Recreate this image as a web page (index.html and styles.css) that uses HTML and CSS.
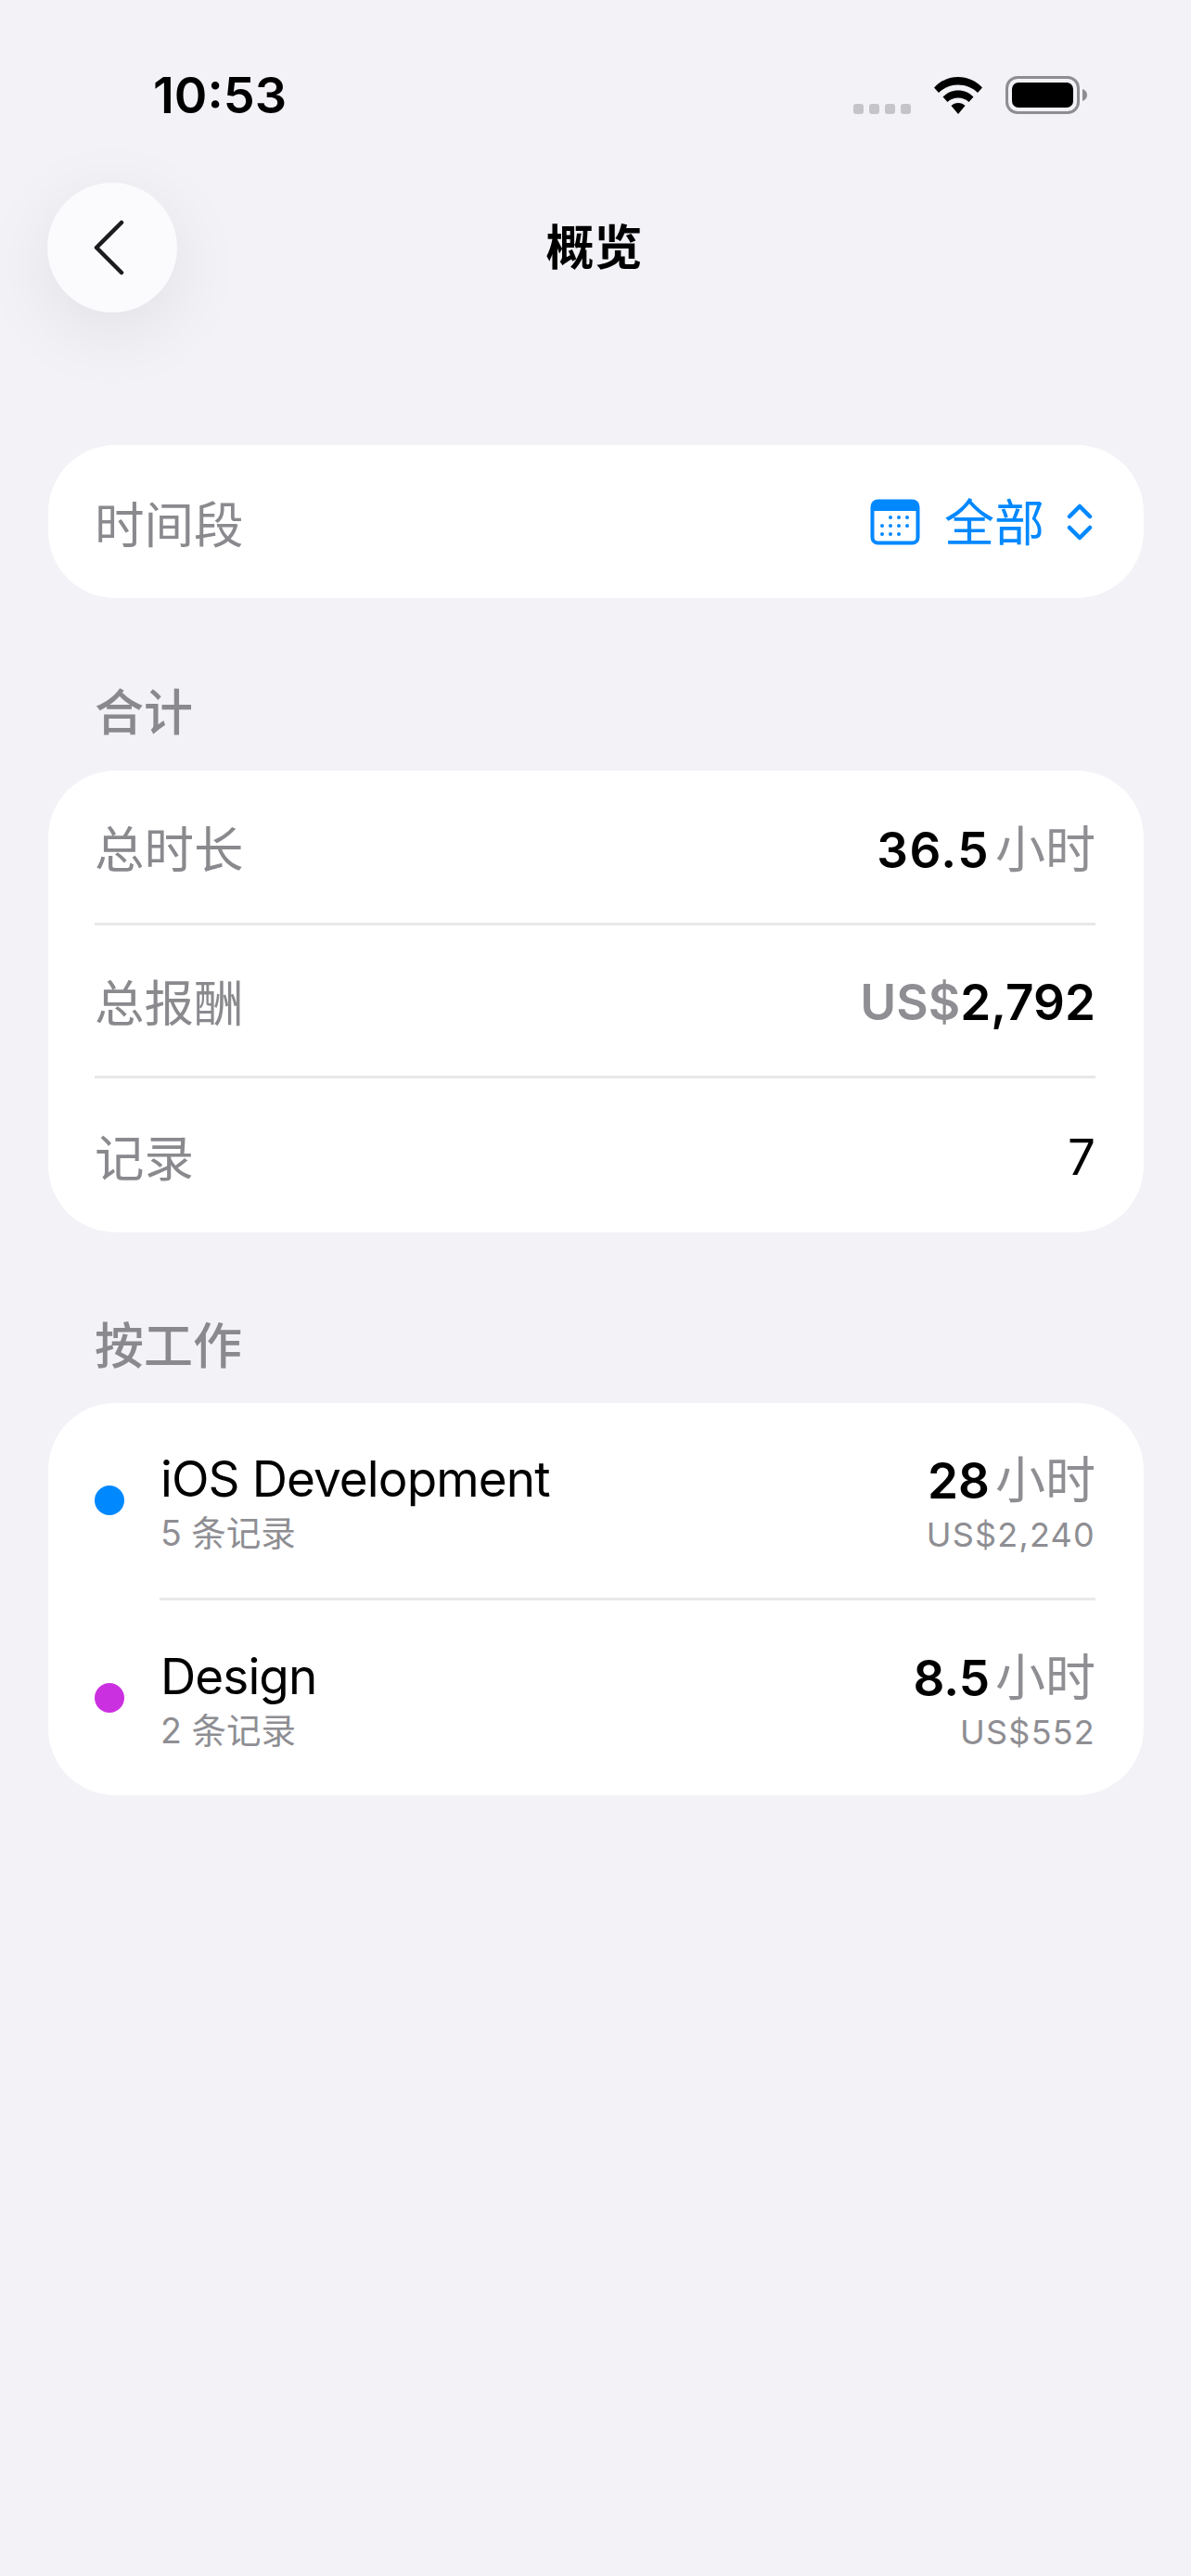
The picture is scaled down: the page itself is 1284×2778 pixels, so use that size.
FILE: index.html
```html
<!DOCTYPE html>
<html lang="zh-CN">
<head>
<meta charset="utf-8">
<title>概览</title>
<link rel="stylesheet" href="styles.css">
</head>
<body>
<div class="screen">
  <header class="status">
    <span class="time">10:53</span>
    <div class="status-icons">
      <div class="signal"><i></i><i></i><i></i><i></i></div>
      <svg class="wifi" viewBox="0 0 54 40" width="54" height="40"><path d="M27 0C17 0 8 4 1 11.500L6 17C11.500 11.500 19 8.500 27 8.500S42.500 11.500 48 17L53 11.500C46 4 37 0 27 0Z" fill="#000"/><path d="M27 14.500C20.500 14.500 15 17 10.500 21.500L15.500 27C18.500 24 22.500 22.500 27 22.500S35.500 24 38.500 27L43.500 21.500C39 17 33.500 14.500 27 14.500Z" fill="#000"/><path d="M27 28C24 28 21.500 29 19.500 31L27 40L34.500 31C32.500 29 30 28 27 28Z" fill="#000"/></svg>
      <svg class="battery" viewBox="0 0 88 41" width="88" height="41"><rect x="1.500" y="1.500" width="77" height="38" rx="11.500" fill="none" stroke="#8e8e92" stroke-width="3"/><rect x="7" y="7" width="66" height="27" rx="7" fill="#000"/><path d="M83 14C86 15 88 17.500 88 20.500S86 26 83 27Z" fill="#8e8e92"/></svg>
    </div>
  </header>

  <nav class="nav">
    <button class="back" aria-label="返回">
      <svg viewBox="0 0 36 60" width="36" height="60"><path d="M32 3L5 30L32 57" fill="none" stroke="#1c1c1e" stroke-width="4.500" stroke-linecap="round" stroke-linejoin="round"/></svg>
    </button>
    <h1 class="title">概览</h1>
  </nav>

  <main class="content">
    <section class="card period">
      <div class="row">
        <span class="label">时间段</span>
        <div class="picker">
          <svg class="cal" viewBox="0 0 54 50" width="54" height="50">
            <rect x="2.500" y="2.500" width="49" height="45" rx="6" fill="#fff" stroke="#0088ff" stroke-width="4"/>
            <path d="M2 13V8a6 6 0 0 1 6-6h38a6 6 0 0 1 6 6v5Z" fill="#0088ff"/>
            <g fill="#0088ff">
              <circle cx="22" cy="20" r="2"/><circle cx="31" cy="20" r="2"/><circle cx="40" cy="20" r="2"/>
              <circle cx="13" cy="29" r="2"/><circle cx="22" cy="29" r="2"/><circle cx="31" cy="29" r="2"/><circle cx="40" cy="29" r="2"/>
              <circle cx="13" cy="38" r="2"/><circle cx="22" cy="38" r="2"/><circle cx="31" cy="38" r="2"/>
            </g>
          </svg>
          <span class="picker-text">全部</span>
          <svg class="chev" viewBox="0 0 28 40" width="28" height="40"><path d="M3 14L14 3L25 14M3 26L14 37L25 26" fill="none" stroke="#0088ff" stroke-width="4.500" stroke-linecap="round" stroke-linejoin="round"/></svg>
        </div>
      </div>
    </section>

    <h2 class="section first">合计</h2>
    <section class="card">
      <div class="row">
        <span class="label">总时长</span>
        <span class="value"><b class="num wide">36.5</b><span class="unit">小时</span></span>
      </div>
      <div class="sep"></div>
      <div class="row mid">
        <span class="label">总报酬</span>
        <span class="value"><b class="cur">US$</b><b class="num">2,792</b></span>
      </div>
      <div class="sep"></div>
      <div class="row last">
        <span class="label">记录</span>
        <span class="value plain">7</span>
      </div>
    </section>

    <h2 class="section">按工作</h2>
    <section class="card">
      <div class="job">
        <i class="dot blue"></i>
        <div class="job-main">
          <div class="job-name">iOS Development</div>
          <div class="job-sub">5 条记录</div>
        </div>
        <div class="job-side">
          <span class="value"><b class="num">28</b><span class="unit">小时</span></span>
          <div class="money">US$2,240</div>
        </div>
      </div>
      <div class="sep inset"></div>
      <div class="job">
        <i class="dot purple"></i>
        <div class="job-main">
          <div class="job-name">Design</div>
          <div class="job-sub">2 条记录</div>
        </div>
        <div class="job-side">
          <span class="value"><b class="num">8.5</b><span class="unit">小时</span></span>
          <div class="money">US$552</div>
        </div>
      </div>
    </section>
  </main>
</div>
</body>
</html>
```

FILE: styles.css
```css
* { box-sizing: border-box; }
html, body { margin: 0; padding: 0; }
body {
  background: #f2f2f7;
  color: #000;
  font-family: Inter, "Noto Sans CJK SC", sans-serif;
}
.screen { width: 1284px; min-height: 2778px; }

.status {
  height: 197px;
  padding: 0 112px 0 165px;
  display: flex;
  justify-content: space-between;
  align-items: flex-start;
}
.time {
  margin-top: 71px;
  font-size: 54px;
  line-height: 64px;
  font-weight: 600;
}
.status-icons {
  margin-top: 82px;
  display: flex;
  align-items: flex-start;
}
.signal { display: flex; gap: 6px; margin: 30px 24px 0 0; }
.signal i { width: 11px; height: 11px; border-radius: 3px; background: #c4c4c9; }
.wifi { display: block; margin: 1px 24px 0 0; }
.battery { display: block; }

.nav {
  height: 140px;
  padding: 0 52px 0 51px;
  display: grid;
  grid-template-columns: 140px 1fr 140px;
  align-items: center;
}
.back {
  width: 140px;
  height: 140px;
  padding: 0;
  border: 0;
  border-radius: 50%;
  background: #fbfbfe;
  box-shadow: 0 20px 80px rgba(0, 0, 0, 0.08);
  display: flex;
  align-items: center;
  justify-content: center;
}
.back svg { display: block; margin-right: 9px; }
.title {
  margin: 0 2px 6px 0;
  text-align: center;
  font-size: 52px;
  line-height: 60px;
  font-weight: 600;
  font-family: "Noto Sans CJK SC", sans-serif;
}

.content { padding: 143px 51px 0 52px; }
.card { background: #fff; border-radius: 72px; overflow: hidden; }
.section {
  margin: 87px 0 31px;
  padding-left: 50px;
  height: 66px;
  font-size: 53px;
  line-height: 64px;
  font-weight: 500;
  color: #8a8a8e;
  font-family: "Noto Sans CJK SC", sans-serif;
}
.section.first { margin: 88px 0 32px; }
.row {
  height: 164px;
  padding: 0 52px 0 50px;
  display: flex;
  justify-content: space-between;
  align-items: center;
}
.row.mid { height: 162px; }
.row.last { height: 166px; }
.period .row { height: 165px; }
.label {
  font-size: 53.500px;
  line-height: 64px;
  color: #8a8a8e;
  font-family: "Noto Sans CJK SC", sans-serif;
}
.sep { height: 3px; margin: 0 52px 0 50px; background: #e8e8ea; }
.sep.inset { margin-left: 120px; }

.picker { display: flex; align-items: center; margin-right: 3px; }
.cal { display: block; margin-right: 26px; }
.picker-text {
  color: #0088ff;
  font-size: 54px;
  line-height: 60px;
  margin: 0 24px 3px 0;
  font-family: "Noto Sans CJK SC", sans-serif;
}
.chev { display: block; }

.value { display: flex; align-items: baseline; font-size: 53px; line-height: 64px; }
.row .value { padding-top: 3px; }
.num { font-weight: 600; }
.num.wide { letter-spacing: 1.500px; }
.cur { font-weight: 600; color: #8e8e93; }
.unit {
  margin-left: 6px;
  font-size: 54px;
  color: #8e8e93;
  font-family: "Noto Sans CJK SC", sans-serif;
}

.job {
  height: 210px;
  padding: 0 52px 0 50px;
  display: flex;
  align-items: center;
}
.dot { width: 32px; height: 32px; border-radius: 50%; flex: none; }
.dot.blue { background: #0088ff; }
.dot.purple { background: #cb30e0; }
.job-main { margin-left: 39px; flex: 1; padding-top: 4px; }
.job-name { font-size: 53px; line-height: 62px; letter-spacing: -0.900px; }
.job-sub {
  font-size: 37.500px;
  line-height: 44px;
  color: #8e8e93;
  margin-top: 6px;
}
.job-side { display: flex; flex-direction: column; align-items: flex-end; padding-top: 2px; }
.money {
  font-size: 36px;
  line-height: 44px;
  color: #8e8e93;
  letter-spacing: 1.200px;
  margin-top: 4px;
}
```
